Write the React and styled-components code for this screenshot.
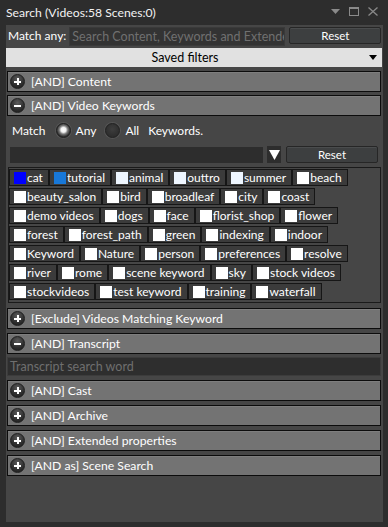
import React from "react";
import styled, { createGlobalStyle } from "styled-components";

const Global = createGlobalStyle`
  html, body { margin: 0; padding: 0; background: #2d2d2d; }
  body { font-family: "Lato", "Noto Sans", sans-serif; font-size: 12px; color: #fff; }
  * { box-sizing: border-box; }
`;

const Window = styled.div`
  width: 388px;
  height: 527px;
  background: #2d2d2d;
  display: flex;
  flex-direction: column;
  padding: 0 5px 5px 6px;
`;

const TitleBar = styled.div`
  height: 25px;
  display: flex;
  align-items: center;
  justify-content: space-between;
  font-size: 12.2px;
  color: #f2f2f2;
`;

const TitleText = styled.div`
  margin-top: -1px;
`;

const TitleIcons = styled.div`
  display: flex;
  align-items: center;
  gap: 9px;
  margin-right: 5px;
  margin-top: -2px;
`;

const Panel = styled.div`
  flex: 1;
  background: #464646;
  display: flex;
  flex-direction: column;
  padding: 2px 1px 0 1px;
`;

const MatchAnyRow = styled.div`
  display: flex;
  align-items: flex-start;
  height: 19px;
  gap: 3px;
`;

const Label = styled.span`
  font-size: 12px;
  color: #fff;
  white-space: nowrap;
  line-height: 18px;
  padding-left: ${(p) => p.$pl || "0"};
`;

const SearchInput = styled.div`
  width: 216px;
  height: 19px;
  background: #333333;
  border: 1px solid #3a3a3a;
  color: #707070;
  font-size: 12.5px;
  line-height: 17px;
  padding-left: 2px;
  white-space: nowrap;
  overflow: hidden;
  text-overflow: clip;
`;

const ResetButton = styled.div`
  width: 92px;
  height: 17px;
  margin-left: ${(p) => p.$ml || "0"};
  background: #3d3f40;
  border: 1px solid #262626;
  border-radius: 2px;
  box-shadow: inset 0 1px 0 #4a4c4d;
  color: #fff;
  font-size: 11.5px;
  line-height: 15px;
  text-align: center;
`;

const SavedFilters = styled.div`
  height: 19px;
  margin-top: 2px;
  margin-left: -1px;
  background: #e1e1e1;
  color: #000;
  display: flex;
  align-items: center;
  font-size: 12.5px;
`;

const SavedText = styled.div`
  flex: 1;
  text-align: center;
`;

const SavedArrow = styled.div`
  width: 18px;
  display: flex;
  justify-content: center;
`;

const Header = styled.div`
  height: 21px;
  margin-top: ${(p) => p.$mt || "4px"};
  margin-right: 1px;
  background: #737373;
  border: 1px solid #0c0c0c;
  display: flex;
  align-items: center;
  gap: 6px;
  padding-left: 2px;
  font-size: 12.2px;
  color: #fff;
  box-shadow: inset 0 1px 0 #7e7e7e;
`;

const ToggleIcon = styled.div`
  width: 15px;
  height: 15px;
  border-radius: 50%;
  background: radial-gradient(circle at 50% 30%, #5c5c5c 0%, #2e2e2e 60%, #1a1a1a 100%);
  border: 1px solid #202020;
  position: relative;
  flex: none;
  &::before {
    content: "";
    position: absolute;
    left: 3px;
    top: 5.5px;
    width: 7px;
    height: 2px;
    background: #fff;
  }
  &::after {
    content: "";
    display: ${(p) => (p.$open ? "none" : "block")};
    position: absolute;
    left: 5.5px;
    top: 3px;
    width: 2px;
    height: 7px;
    background: #fff;
  }
`;

const KeywordMatchRow = styled.div`
  display: flex;
  align-items: center;
  height: 19px;
  margin-top: 5px;
  padding-left: 5px;
`;

const Radio = styled.div`
  width: 15px;
  height: 15px;
  border-radius: 50%;
  border: 1px solid #222;
  background: ${(p) =>
    p.$checked
      ? "radial-gradient(circle at 50% 45%, #ffffff 0%, #f2f2f2 25%, #777 45%, #2e2e2e 70%, #262626 100%)"
      : "radial-gradient(circle at 50% 40%, #3e3e3e 0%, #303030 60%, #2a2a2a 100%)"};
  box-shadow: 0 0 0 1px #555;
  margin: 0 5px 0 ${(p) => p.$ml || "0"};
  flex: none;
`;

const KeywordInputRow = styled.div`
  display: flex;
  align-items: flex-start;
  margin-top: 6px;
  padding-left: 3px;
`;

const DarkBar = styled.div`
  width: 253px;
  height: 16px;
  margin-top: 1px;
  background: #2d2d2d;
`;

const DropBox = styled.div`
  width: 14px;
  height: 17px;
  margin-left: 4px;
  background: #2d2d2d;
  display: flex;
  align-items: center;
  justify-content: center;
`;

const TagBox = styled.div`
  margin-top: 4px;
  margin-left: 1px;
  margin-right: 1px;
  border: 1px solid #1a1a1a;
  padding: 1px 0 2px 0;
  display: flex;
  flex-direction: column;
  gap: 2px;
`;

const TagRow = styled.div`
  display: flex;
  gap: 0;
`;

const Tag = styled.div`
  height: 17px;
  border: 1px solid #161616;
  background: #3b3b3b;
  display: flex;
  align-items: center;
  padding: 0 5px 0 4px;
  font-size: 12px;
  color: #fff;
  white-space: nowrap;
`;

const Check = styled.span`
  width: 12px;
  height: 12px;
  background: ${(p) => p.$color || "#fff"};
  margin-right: 1px;
  flex: none;
`;

const TranscriptInput = styled.div`
  height: 19px;
  margin-top: 3px;
  margin-right: 1px;
  background: #2e2e2e;
  border: 1px solid #3c3c3c;
  color: #6f6f6f;
  font-size: 12.5px;
  line-height: 17px;
  padding-left: 2px;
`;

const tagRows = [
  [["cat", "#0000ff"], ["tutorial", "#1878d8"], ["animal", "#eef6ff"], ["outtro", "#eef6ff"], ["summer", "#eef6ff"], ["beach"]],
  [["beauty_salon"], ["bird"], ["broadleaf"], ["city"], ["coast"]],
  [["demo videos"], ["dogs"], ["face"], ["florist_shop"], ["flower"]],
  [["forest"], ["forest_path"], ["green"], ["indexing"], ["indoor"]],
  [["Keyword"], ["Nature"], ["person"], ["preferences"], ["resolve"]],
  [["river"], ["rome"], ["scene keyword"], ["sky"], ["stock videos"]],
  [["stockvideos"], ["test keyword"], ["training"], ["waterfall"]],
];

const SectionHeader = ({ open, mt, children }) => (
  <Header $mt={mt}>
    <ToggleIcon $open={open} />
    <span>{children}</span>
  </Header>
);

export default function App() {
  return (
    <>
      <Global />
      <Window>
        <TitleBar>
          <TitleText>Search (Videos:58 Scenes:0)</TitleText>
          <TitleIcons>
            <svg width="9" height="5" viewBox="0 0 9 5"><path d="M0 0 H9 L4.5 5 Z" fill="#8a8a8a" /></svg>
            <svg width="10" height="9" viewBox="0 0 10 9"><rect x="0.5" y="0.5" width="9" height="8" fill="none" stroke="#8a8a8a" /><rect x="0" y="0" width="10" height="2" fill="#8a8a8a" /></svg>
            <svg width="10" height="9" viewBox="0 0 10 9"><path d="M0.5 0.5 L9.5 8.5 M9.5 0.5 L0.5 8.5" stroke="#8a8a8a" strokeWidth="1.3" /></svg>
          </TitleIcons>
        </TitleBar>
        <Panel>
          <MatchAnyRow>
            <Label $pl="1px">Match any:</Label>
            <SearchInput>Search Content, Keywords and Extended</SearchInput>
            <ResetButton $ml="1px">Reset</ResetButton>
          </MatchAnyRow>
          <SavedFilters>
            <SavedText>Saved filters</SavedText>
            <SavedArrow>
              <svg width="8" height="5" viewBox="0 0 8 5"><path d="M0 0 H8 L4 5 Z" fill="#000" /></svg>
            </SavedArrow>
          </SavedFilters>
          <SectionHeader mt="4px">[AND] Content</SectionHeader>
          <SectionHeader open mt="3px">[AND] Video Keywords</SectionHeader>
          <KeywordMatchRow>
            <Label>Match</Label>
            <Radio $checked $ml="10px" />
            <Label>Any</Label>
            <Radio $ml="9px" />
            <Label>All</Label>
            <Label $pl="9px">Keywords.</Label>
          </KeywordMatchRow>
          <KeywordInputRow>
            <DarkBar />
            <DropBox>
              <svg width="11" height="10" viewBox="0 0 11 10"><path d="M0 0 H11 L5.5 10 Z" fill="#fff" /></svg>
            </DropBox>
            <ResetButton $ml="5px">Reset</ResetButton>
          </KeywordInputRow>
          <TagBox>
            {tagRows.map((row, i) => (
              <TagRow key={i}>
                {row.map(([name, color]) => (
                  <Tag key={name}>
                    <Check $color={color} />
                    {name}
                  </Tag>
                ))}
              </TagRow>
            ))}
          </TagBox>
          <SectionHeader mt="5px">[Exclude] Videos Matching Keyword</SectionHeader>
          <SectionHeader open>[AND] Transcript</SectionHeader>
          <TranscriptInput>Transcript search word</TranscriptInput>
          <SectionHeader>[AND] Cast</SectionHeader>
          <SectionHeader>[AND] Archive</SectionHeader>
          <SectionHeader>[AND] Extended properties</SectionHeader>
          <SectionHeader>[AND as] Scene Search</SectionHeader>
        </Panel>
      </Window>
    </>
  );
}
